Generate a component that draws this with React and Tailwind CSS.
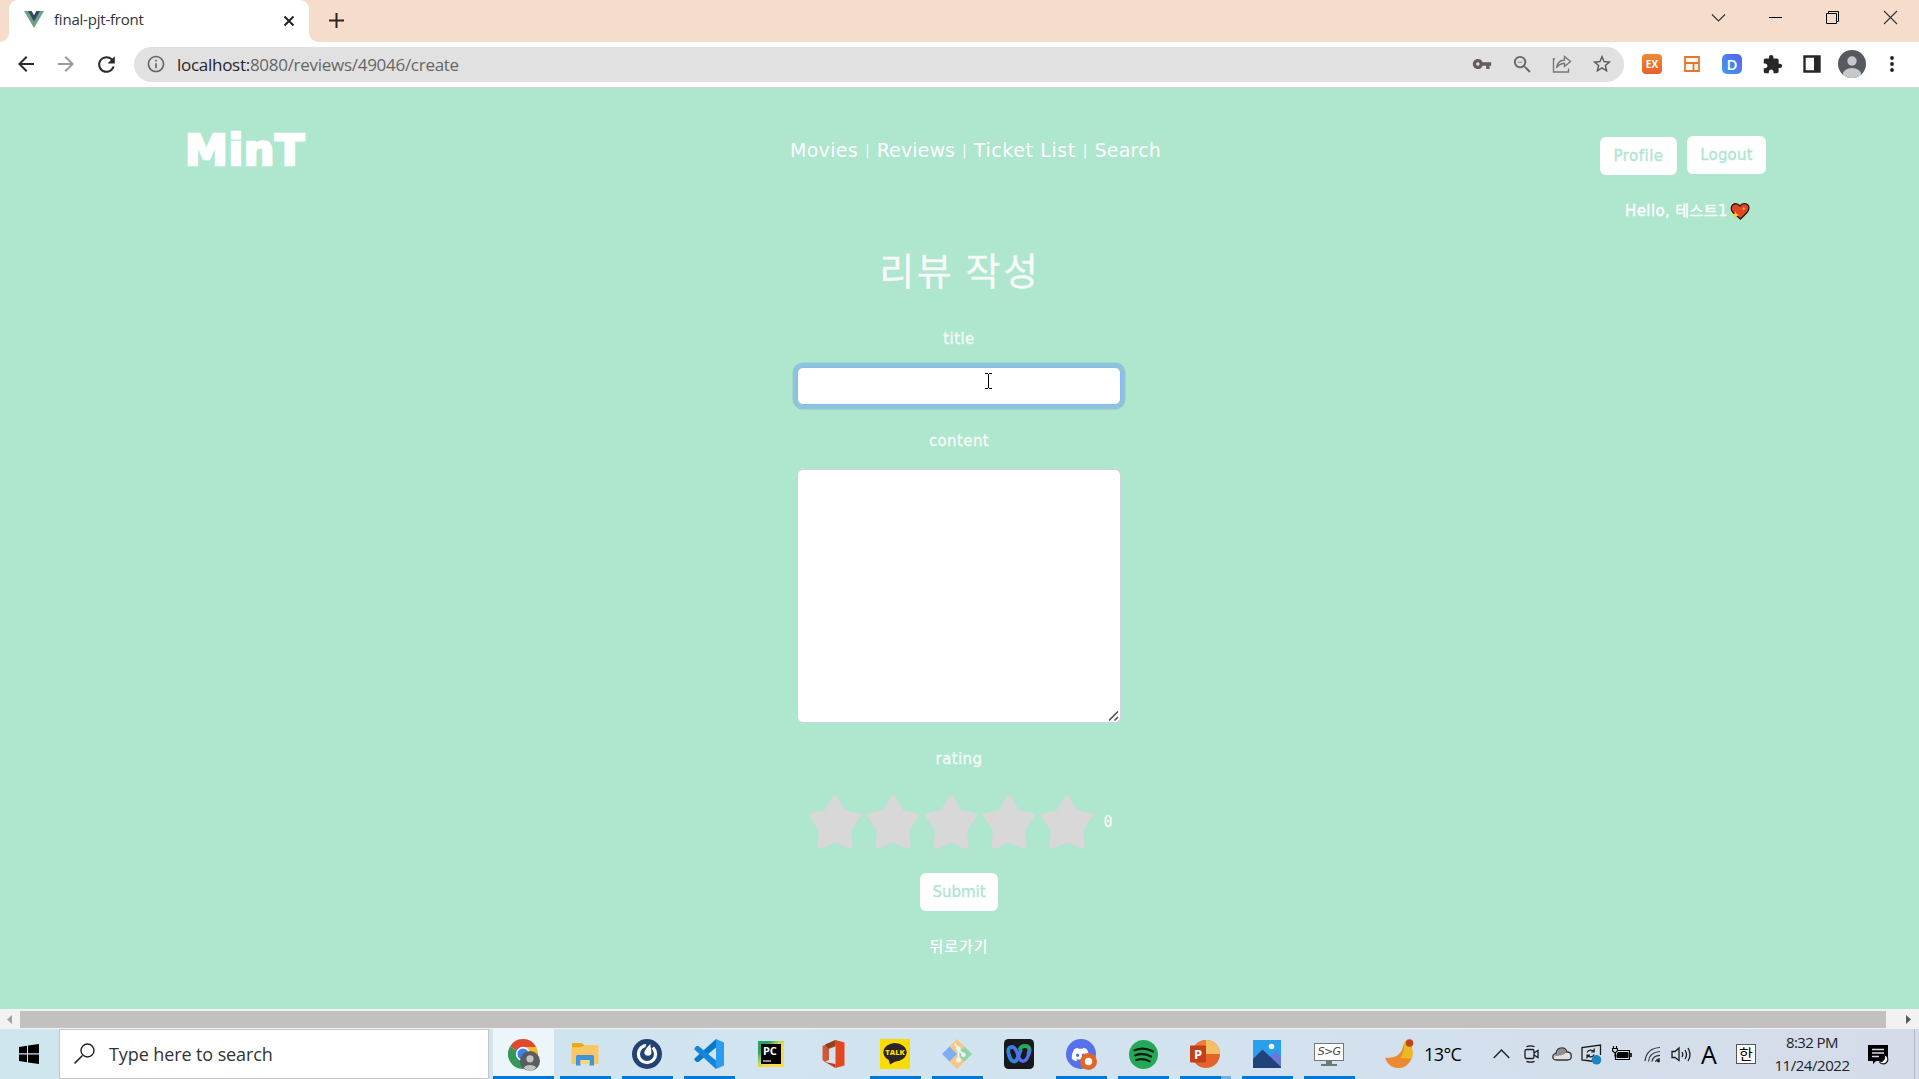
import React from "react";
import {
  MdArrowBack,
  MdArrowForward,
  MdRefresh,
  MdInfoOutline,
  MdVpnKey,
  MdOutlineZoomOut,
  MdStarBorder,
  MdExtension,
} from "react-icons/md";
import { FaDiscord } from "react-icons/fa";

/* ---------- browser chrome ---------- */

function TabStrip() {
  return (
    <div className="flex h-[42px] items-start bg-[#f6dccb] pl-[9px]">
      <div className="relative flex h-[42px] w-[300px] items-center rounded-t-[9px] bg-white pb-[3px] pl-[15px] pr-[14px]">
        <svg className="absolute bottom-0 -left-[9px] size-[9px]" viewBox="0 0 9 9">
          <path d="M9 0V9H0A9 9 0 0 0 9 0Z" fill="#fff" />
        </svg>
        <svg className="absolute bottom-0 -right-[9px] size-[9px]" viewBox="0 0 9 9">
          <path d="M0 0V9H9A9 9 0 0 1 0 0Z" fill="#fff" />
        </svg>
        <svg className="h-[17px] w-[20px]" viewBox="0 0 20 17">
          <path d="M0 0H20L10 17Z" fill="#6f9f88" />
          <path d="M4 0H16L10 10.5Z" fill="#35495e" />
          <path d="M7.6 0H12.4L10 4.2Z" fill="#fff" />
        </svg>
        <span className="ml-[10px] flex-1 text-[15px] tracking-[-0.21px] text-[#333]">final-pjt-front</span>
        <svg className="mt-[3px] size-[12px]" viewBox="0 0 12 12">
          <path d="M1.5 1.5 10.5 10.5M10.5 1.5 1.5 10.5" stroke="#222" strokeWidth="2" />
        </svg>
      </div>
      <svg className="ml-[20px] mt-[13px] size-[15px]" viewBox="0 0 15 15">
        <path d="M7.5 0V15M0 7.5H15" stroke="#2b2622" strokeWidth="2" />
      </svg>
      <div className="ml-auto flex pt-[10px]">
        <div className="flex w-[57px] justify-center">
          <svg className="size-[15px]" viewBox="0 0 15 15">
            <path d="M1 4.5 7.5 11 14 4.5" fill="none" stroke="#333" strokeWidth="1.1" />
          </svg>
        </div>
        <div className="flex w-[57px] justify-center">
          <svg className="size-[15px]" viewBox="0 0 15 15">
            <path d="M1 7.5H14" stroke="#000" strokeWidth="1" />
          </svg>
        </div>
        <div className="flex w-[57px] justify-center">
          <svg className="size-[15px]" viewBox="0 0 15 15">
            <path d="M1.5 3.5H11.5V13.5H1.5ZM3.5 3.5V1.5H13.5V11.5H11.5" fill="none" stroke="#000" />
          </svg>
        </div>
        <div className="flex w-[58px] justify-center">
          <svg className="size-[15px]" viewBox="0 0 15 15">
            <path d="M1 1 14 14M14 1 1 14" stroke="#333" strokeWidth="1.1" />
          </svg>
        </div>
      </div>
    </div>
  );
}

function ToolCell({ children }) {
  return <div className="flex w-[40px] shrink-0 items-center justify-center">{children}</div>;
}

function Toolbar() {
  return (
    <div className="flex h-[46px] items-center border-b border-[#d5d5d5] bg-white pb-px pl-[6px]">
      <ToolCell><MdArrowBack className="size-[24px] text-[#2a2a2a]" /></ToolCell>
      <ToolCell><MdArrowForward className="size-[24px] text-[#9a9a9a]" /></ToolCell>
      <ToolCell><MdRefresh className="size-[25px] text-[#2a2a2a]" /></ToolCell>
      <div className="ml-[8px] flex h-[35px] w-[1490px] items-center rounded-full bg-[#e1e1e1] pl-[12px] pr-[2px]">
        <MdInfoOutline className="size-[20px] text-[#666]" />
        <span className="ml-[11px] flex-1 pt-px text-[17px] tracking-[-0.28px] text-[#666]">
          <span className="text-[#262626]">localhost:</span>8080/reviews/49046/create
        </span>
        <ToolCell><MdVpnKey className="size-[20px] text-[#665c5c]" /></ToolCell>
        <ToolCell><MdOutlineZoomOut className="size-[23px] text-[#666]" /></ToolCell>
        <ToolCell>
          <svg className="size-[20px]" viewBox="0 0 20 20">
            <path d="M3 5H1.5V18H16.5V14.5" fill="none" stroke="#777" strokeWidth="1.4" />
            <path d="M4.5 14C5 9 8 6.5 12.5 6V2.5L18.5 7.5 12.5 12.5V9.3C9 9.5 6.5 10.5 4.5 14Z" fill="none" stroke="#777" strokeWidth="1.4" />
          </svg>
        </ToolCell>
        <ToolCell><MdStarBorder className="size-[22px] text-[#5f5a5a]" /></ToolCell>
      </div>
      <div className="ml-[8px] flex items-center">
        <ToolCell>
          <span className="flex h-[20px] w-[20px] items-center justify-center rounded-[4px] bg-gradient-to-b from-[#ec8b34] to-[#e5602c] text-[10px] font-bold text-white">EX</span>
        </ToolCell>
        <ToolCell>
          <svg className="size-[16px]" viewBox="0 0 16 16">
            <path d="M1 1H15V15H1ZM1 7H15M9.500 7V15" fill="#fff8ee" stroke="#e8752e" strokeWidth="1.8" />
          </svg>
        </ToolCell>
        <ToolCell>
          <span className="flex size-[20px] items-center justify-center rounded-[5px] bg-gradient-to-tr from-[#3d9df0] to-[#5560e6] text-[15px] font-semibold leading-none text-white">D</span>
        </ToolCell>
        <ToolCell><MdExtension className="size-[21px] text-[#2a2626]" /></ToolCell>
        <ToolCell>
          <svg className="size-[18px]" viewBox="0 0 18 18">
            <path d="M1.5 1.5H16.5V16.5H1.5Z" fill="#fff" stroke="#2a2626" strokeWidth="2.4" />
            <path d="M11 1H17V17H11Z" fill="#2a2626" />
          </svg>
        </ToolCell>
        <ToolCell>
          <svg className="size-[28px]" viewBox="0 0 28 28">
            <clipPath id="av"><circle cx="14" cy="14" r="14" /></clipPath>
            <g clipPath="url(#av)">
              <path d="M0 0H28V28H0Z" fill="#565a5e" />
              <circle cx="14" cy="11" r="4.7" fill="#c4c9cb" />
              <ellipse cx="14" cy="25" rx="9.5" ry="7" fill="#c4c9cb" />
            </g>
          </svg>
        </ToolCell>
        <ToolCell>
          <svg className="h-[16px] w-[4px]" viewBox="0 0 4 16">
            <circle cx="2" cy="2" r="1.9" fill="#222" />
            <circle cx="2" cy="8" r="1.9" fill="#222" />
            <circle cx="2" cy="14" r="1.9" fill="#222" />
          </svg>
        </ToolCell>
      </div>
    </div>
  );
}

/* ---------- page ---------- */

function Bar() {
  return <span className="mx-[7px] inline-block text-[14px] leading-none">|</span>;
}

function HeaderBar() {
  return (
    <header className="flex h-[152px] items-start text-white">
      <div className="w-[790px] pl-[185px] pt-[33px]">
        <span className="text-[43px] font-black leading-[58px] tracking-[0.6px] [-webkit-text-stroke:2.6px_white] [stroke-linejoin:round]">MinT</span>
      </div>
      <nav className="flex w-[810px] items-center whitespace-nowrap pt-[48px] text-[19px] leading-[28px]">
        <a className="tracking-[0.3px]">Movies</a><Bar /><a className="tracking-[0.1px]">Reviews</a><Bar />
        <a className="tracking-[0.6px]">Ticket List</a><Bar /><a className="tracking-[0.2px]">Search</a>
      </nav>
      <div className="pt-[48px]">
        <div className="flex items-start gap-[10px] text-[15px] text-[#aee6ce] [-webkit-text-stroke:0.35px_#aee6ce]">
          <button className="mt-px h-[38px] w-[77px] rounded-[6px] bg-white tracking-[0.5px]">Profile</button>
          <button className="h-[38px] w-[79px] rounded-[6px] bg-white tracking-[0.2px]">Logout</button>
        </div>
        <div className="mt-[24px] flex items-center pl-[25px] text-[15px] leading-[24px] [-webkit-text-stroke:0.35px_white]">
          <span className="w-[104px] whitespace-nowrap tracking-[0.4px]">Hello, 테스트1</span>
          <svg className="ml-px h-[17px] w-[20px]" viewBox="0 0 20 17">
            <path d="M10 3C12 0 16 0 18 2.2 20 5 18.6 7.5 17 9.5L10.5 16 3 9.5C1 7.5 .6 4 2.6 2 5 0 8 .4 10 3Z" fill="#e04524" stroke="#2b1712" strokeWidth="1.3" />
            <path d="M5.5 8.5 6.6 11 9.3 12 6.6 13 5.5 15.6 4.4 13 1.8 12 4.4 11Z" fill="#ffd21f" />
            <path d="M13.8 3.5 14.4 5 16 5.6 14.4 6.2 13.8 7.8 13.2 6.2 11.8 5.6 13.2 5Z" fill="#ffb020" />
          </svg>
        </div>
      </div>
    </header>
  );
}

function Label({ children, className }) {
  return (
    <div className={"text-[15px] leading-[24px] tracking-[0.4px] text-[#f4fbf8] [-webkit-text-stroke:0.35px_#f4fbf8] " + className}>{children}</div>
  );
}

function Star() {
  return (
    <svg className="h-[54px] w-[52px]" viewBox="0 0 52 54">
      <path
        d="M26 2.5 34.8 17.2 49.8 20.2 39.7 35.2 41.4 51.8 26 44.8 10.6 51.8 12.3 35.2 2.2 20.2 17.2 17.2Z"
        fill="#d7d8d7" stroke="#d7d8d7" strokeWidth="4.6" strokeLinejoin="round"
      />
    </svg>
  );
}

function ReviewForm() {
  return (
    <main className="flex w-[1918px] flex-col items-center">
      <h1 className="h-[62px] pl-[2px] font-['Noto_Sans_CJK_KR',sans-serif] text-[38px] leading-[57px] tracking-[2.6px] text-[#f8faf9] [-webkit-text-stroke:0.3px_#f8faf9]">리뷰 작성</h1>
      <Label className="mt-[25px]">title</Label>
      <div className="relative mt-[16px] h-[38px] w-[324px] rounded-[6px] border border-[#86b7fe] bg-white ring-[4.5px] ring-[#8fc3d8]">
        <svg className="absolute left-[187px] top-[5px] h-[16px] w-[7px]" viewBox="0 0 7 16">
          <path d="M0 .5H3M4 .5H7M3.5 1V15M0 15.5H3M4 15.5H7" stroke="#000" fill="none" />
        </svg>
      </div>
      <Label className="mt-[24px]">content</Label>
      <div className="mt-[16px] flex h-[254px] w-[324px] items-end justify-end rounded-[6px] border border-[#ced4da] bg-white pb-px pr-px">
        <svg className="size-[10px]" viewBox="0 0 10 10">
          <path d="M0 9.5 9 .5M5.5 9.5 9 6" stroke="#5a5257" strokeWidth="1.6" />
        </svg>
      </div>
      <Label className="mt-[24px]">rating</Label>
      <div className="mt-[24px] flex h-[54px] items-center pl-[4px]">
        <div className="flex gap-[6px]"><Star /><Star /><Star /><Star /><Star /></div>
        <span className="ml-[10px] font-['DejaVu_Sans_Mono'] text-[15px] leading-[24px] text-white">0</span>
      </div>
      <button className="mt-[24px] h-[38px] w-[78px] rounded-[6px] bg-white text-[15px] text-[#aee6ce] [-webkit-text-stroke:0.35px_#aee6ce]">Submit</button>
      <a className="mt-[24px] text-[15px] font-medium leading-[24px] tracking-[1px] text-white">뒤로가기</a>
    </main>
  );
}

function PageScrollbar() {
  return (
    <div className="flex h-[20px] items-center bg-[#f1f2f1]">
      <div className="flex w-[20px] justify-center pr-px">
        <svg className="h-[9px] w-[5px]" viewBox="0 0 5 9"><path d="M5 0V9L0 4.5Z" fill="#a3a39d" /></svg>
      </div>
      <div className="h-[17px] w-[1866px] bg-[#c3c1bf]" />
      <div className="flex flex-1 justify-end pr-[8px]">
        <svg className="h-[9px] w-[5px]" viewBox="0 0 5 9"><path d="M0 0V9L5 4.5Z" fill="#505f5c" /></svg>
      </div>
    </div>
  );
}

/* ---------- taskbar icons ---------- */

function ChromeIcon() {
  return (
    <svg className="h-[32px] w-[32px]" viewBox="0 0 32 32">
      <path d="M15 15 2 7.5A15 15 0 0 1 28 7.5Z" fill="#de4a30" />
      <path d="M15 15 28 7.5A15 15 0 0 1 15 30L14 22Z" fill="#f0bb2c" />
      <path d="M15 15 2 7.5A15 15 0 0 0 15 30L19 22Z" fill="#33985a" />
      <path d="M15 8H28L29 11 20 14Z" fill="#f0bb2c" />
      <circle cx="15" cy="15" r="7.2" fill="#fff" />
      <circle cx="15" cy="15" r="5.6" fill="#3a82ea" />
      <circle cx="22" cy="22" r="10" fill="#5a5c60" />
      <circle cx="22" cy="19.8" r="3.6" fill="#c3c3c3" />
      <path d="M16 28.5C17 25 27 25 28 28.5 25 33 19 33 16 28.5Z" fill="#c3c3c3" />
    </svg>
  );
}
function FolderIcon() {
  return (
    <svg className="h-[24px] w-[28px]" viewBox="0 0 28 24">
      <path d="M1 1H11L13.5 3.5H27V22H1Z" fill="#e6ac1c" />
      <path d="M.5 5.5 11 5 14 3H27.5V22H.5Z" fill="#f8c766" />
      <path d="M5 23.5V14.5Q5 13 6.5 13H21.5Q23 13 23 14.5V23.5H18.5V18H9.5V23.5Z" fill="#3f92dc" />
      <path d="M9.5 18H18.5V22H9.5Z" fill="#f7d878" />
    </svg>
  );
}
function MattermostIcon() {
  return (
    <svg className="size-[30px]" viewBox="0 0 30 30">
      <circle cx="15" cy="15" r="15" fill="#224274" />
      <circle cx="15" cy="15" r="8.6" fill="none" stroke="#fff" strokeWidth="3.2" />
      <path d="M14.5 3.5 19.5 3 22.5 7 19 10H13Z" fill="#224274" />
      <path d="M18.3 5C14.5 9 12 11.5 12.5 14.5 13.5 17.5 18.5 17.5 19.3 14.5 19.9 11.5 18.5 9 18.3 5Z" fill="#fff" />
    </svg>
  );
}
function VSCodeIcon() {
  return (
    <svg className="size-[30px]" viewBox="0 0 30 30">
      <path d="M22 0 30 3.5V26.5L22 30Z" fill="#2a9df0" />
      <path d="M22 0V8.5L4.5 23 2.5 23 .5 21 .5 19.5Z" fill="#0a78c8" />
      <path d="M22 30V21.5L4.5 7 2.5 7 .5 9 .5 10.5Z" fill="#1487dc" />
    </svg>
  );
}
function PyCharmIcon() {
  return (
    <div className="flex size-[26px] items-center justify-center bg-gradient-to-br from-[#28a566] from-25% via-[#c5d94f] via-45% to-[#fada4c] to-60%">
      <div className="flex size-[20px] flex-col justify-between bg-black p-[2px]">
        <span className="text-[11px] font-bold leading-[9px] tracking-[-0.2px] text-white">PC</span>
        <span className="h-[2px] w-[8px] bg-[#8a8a8a]" />
      </div>
    </div>
  );
}
function OfficeIcon() {
  return (
    <svg className="h-[28px] w-[23px]" viewBox="0 0 23 28">
      <path d="M13.5 0 22.5 2.5V25.5L13.5 28Z" fill="#e2481f" />
      <path d="M13.5 0V6.5L7 9V20L3 22 .5 20V6Z" fill="#cb5a36" />
      <path d="M3 4.5 13.5 0V5.5L6 8.5Z" fill="#8d451d" />
      <path d="M3 22 13.5 24V28Z" fill="#c43a1b" />
    </svg>
  );
}
function TalkIcon() {
  return (
    <div className="relative flex size-[30px] items-center justify-center bg-[#f9dd00]">
      <svg className="absolute left-[3px] top-[4px] h-[22px] w-[24px]" viewBox="0 0 24 22">
        <ellipse cx="12" cy="9.3" rx="11.6" ry="9.2" fill="#2b2422" />
        <path d="M5.5 16 7 21.5 13 18Z" fill="#2b2422" />
      </svg>
      <span className="relative mb-[3px] text-[7.5px] font-extrabold leading-none text-[#f9dd00]">TALK</span>
    </div>
  );
}
function GitIcon() {
  return (
    <svg className="size-[30px]" viewBox="0 0 30 30">
      <path d="M15 0 22.5 7.5 15 15 7.5 7.5ZM15 15 22.5 22.5 15 30 7.5 22.5Z" fill="#f4c880" />
      <path d="M7.5 7.5 15 15 7.5 22.5 0 15Z" fill="#7fadf2" />
      <path d="M22.5 7.5 30 15 22.5 22.5 15 15Z" fill="#94d2a8" />
      <path d="M12.5 5 16.5 9V21M16.5 11 21.5 15.5" fill="none" stroke="#eef3f5" strokeWidth="1.8" />
      <circle cx="16.5" cy="9.5" r="2.3" fill="#eef3f5" />
      <circle cx="16.5" cy="21" r="2.5" fill="#eef3f5" />
      <circle cx="21.5" cy="15.8" r="2.3" fill="#eef3f5" />
    </svg>
  );
}
function WebexIcon() {
  return (
    <svg className="size-[30px]" viewBox="0 0 30 30" fill="none">
      <rect width="30" height="30" rx="4.5" fill="#17191b" />
      <path d="M15.5 11C17 5.500 25.500 5.500 25.500 11 25.500 12.500 25 14 24 15.500" stroke="#27a85c" strokeWidth="4" />
      <path d="M9 8.500C4.500 6.500 3.500 11.500 5 16 6.500 22 10.500 25 13.500 19.500 15 16.500 15.500 13.500 17 10.500" stroke="#2d87dd" strokeWidth="3.8" />
      <path d="M7.500 7.800C13 8 12.500 14 15 19 17.500 24 21.500 22.500 23.500 18.500 25 15.500 25.800 13 25.500 10.500" stroke="#566ff0" strokeWidth="3.4" />
    </svg>
  );
}
function DiscordIcon() {
  return (
    <div className="relative size-[30px] rounded-full bg-[#5571ec]">
      <FaDiscord className="absolute left-[5px] top-[6px] size-[19px] text-white" />
      <svg className="absolute left-[14px] top-[14px] size-[17px]" viewBox="0 0 17 17">
        <circle cx="8.5" cy="8.5" r="8.5" fill="#e2662c" />
        <circle cx="8.5" cy="8.5" r="3.7" fill="#fff" />
      </svg>
    </div>
  );
}
function SpotifyIcon() {
  return (
    <svg className="size-[29px]" viewBox="0 0 29 29">
      <circle cx="14.5" cy="14.5" r="14.5" fill="#24aa57" />
      <path d="M5.5 10.2C11 8 18.5 8.4 24 11.5M6.5 15.3C11.5 13.3 17.5 14 22 16.6M7.3 20C12 18.4 16.5 19 20.5 21.3" fill="none" stroke="#0b1a10" strokeWidth="2.3" strokeLinecap="round" />
    </svg>
  );
}
function PowerPointIcon() {
  return (
    <div className="relative h-[28px] w-[30px]">
      <svg className="absolute inset-0 h-[28px] w-[30px]" viewBox="0 0 30 28">
        <circle cx="16" cy="14" r="14" fill="#e4622c" />
        <path d="M16 0A14 14 0 0 1 30 14H16Z" fill="#f5c064" />
        <path d="M16 0V14H6V4.5A14 14 0 0 1 16 0Z" fill="#ea8040" />
        <rect x="0" y="5.5" width="16" height="17" rx="1" fill="#c23f1a" />
      </svg>
      <span className="absolute left-[4px] top-[6px] text-[13px] font-bold leading-[16px] text-white">P</span>
    </div>
  );
}
function PhotosIcon() {
  return (
    <svg className="size-[28px]" viewBox="0 0 28 28">
      <path d="M0 0H28V28H0Z" fill="#2a9fea" />
      <path d="M16 17 23 11.5 28 16V28H22Z" fill="#6a78d6" />
      <path d="M0 19 9.5 9.5 28 27V28H0Z" fill="#22427a" />
      <circle cx="18.5" cy="6.5" r="2.8" fill="#f3f9fd" />
    </svg>
  );
}
function ScreenToGifIcon() {
  return (
    <div className="flex flex-col items-center">
      <span className="flex h-[18px] w-[30px] items-center justify-center border border-[#737a7a] bg-white font-['DejaVu_Sans'] text-[11px] italic leading-none tracking-[-0.8px] text-[#444]">S&gt;G</span>
      <span className="h-[3px] w-[6px] bg-[#6f7777]" />
      <span className="h-[2px] w-[16px] bg-[#6f7777]" />
    </div>
  );
}

const APPS = [
  { id: "files", icon: <FolderIcon />, open: true },
  { id: "mattermost", icon: <MattermostIcon />, open: true },
  { id: "vscode", icon: <VSCodeIcon />, open: true },
  { id: "pycharm", icon: <PyCharmIcon />, open: false },
  { id: "office", icon: <OfficeIcon />, open: false },
  { id: "talk", icon: <TalkIcon />, open: true },
  { id: "git", icon: <GitIcon />, open: true },
  { id: "webex", icon: <WebexIcon />, open: false },
  { id: "discord", icon: <DiscordIcon />, open: true },
  { id: "spotify", icon: <SpotifyIcon />, open: true },
  { id: "ppt", icon: <PowerPointIcon />, open: true, stacked: true },
  { id: "photos", icon: <PhotosIcon />, open: true },
  { id: "s2g", icon: <ScreenToGifIcon />, open: true },
];

function Tray() {
  return (
    <div className="flex h-full items-center text-black">
      <svg className="ml-[24px] h-[30px] w-[29px]" viewBox="0 0 29 30">
        <path d="M0 18.5C9 19.5 16 17.5 18.5 6L20 3 26 5C27 9 28 13 27 18.5 24 26.5 19 29 13 29 7 29 2 25 0 18.5Z" fill="#ec8a34" />
        <path d="M19 2 23 6 26.5 8C28 12 28 16 27 19.5L15 19C19 15 19 10 19 2Z" fill="#ecb91f" />
        <circle cx="24.5" cy="4" r="3.8" fill="#c24420" />
      </svg>
      <span className="ml-[10px] w-[38px] whitespace-nowrap text-[18px] tracking-[-0.6px]">13°C</span>
      <div className="ml-[24px] flex items-center">
        <div className="flex w-[30px] justify-center">
          <svg className="h-[10px] w-[17px]" viewBox="0 0 17 10"><path d="M.7 9 8.5 1 16.3 9" fill="none" stroke="#222" strokeWidth="1.4" /></svg>
        </div>
        <div className="flex w-[31px] justify-center">
          <svg className="h-[18px] w-[15px]" viewBox="0 0 15 18" fill="none" stroke="#1a1a1a" strokeWidth="1.3">
            <path d="M2.5 1.6Q6.5 0 10.5 1.6M2.5 16.4Q6.5 18 10.5 16.4" />
            <rect x="1" y="4.5" width="9" height="9" rx="1.5" />
            <path d="M10 8 14 5.5V12.5L10 10" />
          </svg>
        </div>
        <div className="flex w-[29px] justify-center">
          <svg className="h-[14px] w-[20px]" viewBox="0 0 20 14">
            <path d="M4.5 13C1.5 13 .7 11 .8 9.5 1 7.5 3 6.5 4 6.5 4.5 3 7 .8 10 .8 13 .8 14.5 3 15 5 18 5 19.3 7 19.3 9 19.3 11.5 17.5 13 15.5 13Z" fill="#e2e2e2" />
            <path d="M1.5 9.5 5 6.5 7 2 10.5 1.2 13.5 3.5 15 5.5 10.5 8Z" fill="#8f8f8f" />
            <path d="M4.5 13C1.5 13 .7 11 .8 9.5 1 7.5 3 6.5 4 6.5 4.5 3 7 .8 10 .8 13 .8 14.5 3 15 5 18 5 19.3 7 19.3 9 19.3 11.5 17.5 13 15.5 13Z" fill="none" stroke="#333" strokeWidth="1.3" />
          </svg>
        </div>
        <div className="flex w-[31px] justify-center">
          <svg className="h-[21px] w-[21px]" viewBox="0 0 21 21">
            <path d="M13 17.5 1 16V3.5L19.5 1V11" fill="none" stroke="#1a1a1a" strokeWidth="1.3" />
            <path d="M6 8.5C7.5 5.5 11 5.5 13 7.5M13.2 4.5V8H10M13 10.5C12 13.5 8.5 13.5 6.2 11.5M6 14.5V11.2H9" fill="none" stroke="#1a1a1a" strokeWidth="1.2" />
            <circle cx="15.5" cy="15.8" r="4.8" fill="#1a86bf" />
          </svg>
        </div>
        <div className="flex w-[30px] justify-center">
          <svg className="mb-[2px] h-[15px] w-[20px]" viewBox="0 0 20 15">
            <path d="M3.500 4.500H17.500V13.500H3.500Z" fill="#d5dcea" stroke="#000" strokeWidth="1.2" />
            <path d="M6 6.500H16V11.500H5V9Z" fill="#000" stroke="#000" />
            <path d="M19 7V11" stroke="#000" strokeWidth="1.6" />
            <path d="M1.500 0V2.500M4.500 0V2.500M.6 2.500H5.400V5L3 7 .6 5ZM3 7V10.500" fill="#d5dcea" stroke="#000" strokeWidth="1.1" />
          </svg>
        </div>
        <div className="flex w-[30px] justify-center">
          <svg className="size-[17px]" viewBox="0 0 17 17" fill="none" stroke="#333" strokeWidth="1.2">
            <path d="M1 15C2 7 7 2 16 1.5M4.5 15.5C5 9.5 9 6 16 5.5M8 15.5C8.5 12 11 9.5 16 9.3M11.500 15.8C12 14 13.5 13 16 12.8" />
            <circle cx="14.5" cy="15" r="1.4" fill="#111" stroke="none" />
          </svg>
        </div>
        <div className="flex w-[29px] justify-center">
          <svg className="h-[17px] w-[21px]" viewBox="0 0 21 17" fill="none" stroke="#1a1a1a" strokeWidth="1.3">
            <path d="M1 5.5H4L8 2V14.5L4 11.5H1ZM11 6Q12.5 8.5 11 11M14 4Q17 8.5 14 13M17 2Q21 8.5 17 15" />
          </svg>
        </div>
        <span className="w-[26px] text-center text-[25px] leading-none">A</span>
      </div>
      <span className="ml-[14px] flex size-[20px] items-center justify-center border border-[#555] bg-white text-[15px] leading-none">한</span>
      <div className="ml-[14px] flex w-[84px] flex-col items-center whitespace-nowrap text-[15px] leading-[23px] text-[#1d2226]">
        <span className="tracking-[-0.6px]">8:32 PM</span>
        <span className="tracking-[-0.45px]">11/24/2022</span>
      </div>
      <svg className="ml-[14px] h-[21px] w-[21px]" viewBox="0 0 21 21">
        <path d="M0 1H20V17H8L5 20V17H0Z" fill="#000" />
        <path d="M4 5.5H16M4 9H16M4 12.5H11" stroke="#d5dcea" strokeWidth="1.3" />
        <path d="M16.5 10.5C20 12 21 16 18.5 18.5 16.5 20.5 13 20.3 11.5 18 15 18 17.5 15 16.5 10.5Z" fill="#fff" stroke="#111" strokeWidth="1.1" />
      </svg>
      <div className="ml-[25px] h-full w-px bg-[#b5bac6]" />
    </div>
  );
}

function Taskbar() {
  return (
    <div className="flex h-[50px] bg-gradient-to-r from-[#cfe6ef] via-[#d2e3ef] via-60% to-[#d5dbe9]">
      <div className="flex w-[59px] items-center justify-center pr-px">
        <svg className="size-[20px]" viewBox="0 0 20 20">
          <path d="M0 3 8 1.8V9.3H0ZM9 1.6 20 0V9.3H9ZM0 10.5H8V18.2L0 17ZM9 10.5H20V20L9 18.4Z" fill="#000" />
        </svg>
      </div>
      <div className="mr-[4px] flex w-[430px] items-center border border-[#c6c6c6] bg-white pl-[14px]">
        <svg className="mb-px size-[21px]" viewBox="0 0 21 21">
          <path d="M.6 20.4 8.5 12.5" stroke="#222" strokeWidth="1.5" />
          <circle cx="13.5" cy="7.5" r="6.5" fill="none" stroke="#222" strokeWidth="1.4" />
        </svg>
        <span className="ml-[14px] text-[18px] tracking-[-0.1px] text-[#333]">Type here to search</span>
      </div>
      <div className="mr-px flex w-[61px] flex-col items-center bg-[#ecf5fa]">
        <div className="flex h-[47px] items-center pt-[5px]"><ChromeIcon /></div>
        <span className="h-[3px] w-full bg-[#0078d7]" />
      </div>
      {APPS.map((a) => (
        <div key={a.id} className="flex w-[62px] flex-col items-center pr-px">
          <div className="flex h-[47px] items-center pr-px pt-[3px]">{a.icon}</div>
          {a.open && (
            <span className="flex h-[3px] w-[51px] justify-end bg-[#0078d7]">
              {a.stacked && <span className="h-full w-[10px] bg-[#76aee6]" />}
            </span>
          )}
        </div>
      ))}
      <Tray />
    </div>
  );
}

export default function App() {
  return (
    <div className="flex h-[1079px] w-[1919px] flex-col overflow-hidden font-['Open_Sans','Noto_Sans_CJK_KR',sans-serif]">
      <TabStrip />
      <Toolbar />
      <div className="h-[921px] overflow-hidden bg-[#aee6ce] font-['DejaVu_Sans','Noto_Sans_CJK_KR',sans-serif]">
        <HeaderBar />
        <ReviewForm />
      </div>
      <PageScrollbar />
      <Taskbar />
    </div>
  );
}
